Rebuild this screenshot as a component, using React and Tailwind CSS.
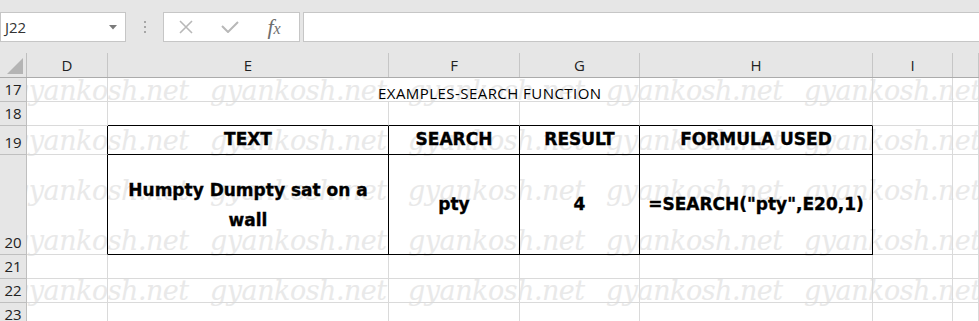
import React from 'react';

const COLS = ['D', 'E', 'F', 'G', 'H', 'I', ''];

const gridCols = 'grid grid-cols-[27px_81px_281px_131px_120px_233px_80px_1fr]';

// which cells carry the black table border (right / bottom)
const blackRight = {
  19: ['D', 'E', 'F', 'G', 'H'],
  20: ['D', 'E', 'F', 'G', 'H'],
};
const blackBottom = {
  18: ['E', 'F', 'G', 'H'],
  19: ['E', 'F', 'G', 'H'],
  20: ['E', 'F', 'G', 'H'],
};

const Cell = ({ row, col, className = '', children }) => {
  const r = (blackRight[row] || []).includes(col);
  const b = (blackBottom[row] || []).includes(col);
  return (
    <div
      className={`border-r border-b ${r ? 'border-r-black' : 'border-r-[#dadada]'} ${
        b ? 'border-b-black' : 'border-b-[#dadada]'
      } ${className}`}
    >
      {children}
    </div>
  );
};

const RowHead = ({ n }) => (
  <div className="bg-[#e6e6e6] border-r border-b border-[#bfbfbf] flex items-end justify-center pb-[4px] font-['Open_Sans',sans-serif] font-normal text-[15px] leading-none text-[#222] [-webkit-text-stroke:0]">
    {n}
  </div>
);

const Watermark = () => (
  <div className="absolute inset-0 flex flex-col gap-[24px] pl-[12px] overflow-hidden pointer-events-none">
    {[0, 1, 2, 3, 4].map((r) => (
      <div key={r} className="flex h-[26px] shrink-0">
        {[0, 1, 2, 3, 4].map((c) => (
          <div
            key={c}
            className="w-[198px] shrink-0 italic text-[27px] leading-[26px] text-[#e9e9e9] font-['DejaVu_Serif',serif] tracking-[-0.5px]"
          >
            gyankosh.net
          </div>
        ))}
      </div>
    ))}
  </div>
);

const Toolbar = () => (
  <div className="h-[53px] bg-[#e6e6e6] flex items-start pt-[12px]">
    <div className="w-[126px] h-[30px] bg-white border border-[#c6c6c6] flex items-center justify-between pl-[4px] pr-[8px]">
      <span className="text-[15px] text-[#333]">J22</span>
      <svg width="8" height="5" viewBox="0 0 8 5">
        <path d="M0 0h8L4 4.5z" fill="#7a7a7a" />
      </svg>
    </div>
    <div className="w-[37px] h-[30px] flex flex-col items-center justify-center gap-[3px]">
      <span className="w-[2px] h-[2px] bg-[#a6a6a6]" />
      <span className="w-[2px] h-[2px] bg-[#a6a6a6]" />
      <span className="w-[2px] h-[2px] bg-[#a6a6a6]" />
    </div>
    <div className="w-[137px] h-[30px] bg-white border border-[#c6c6c6] flex items-center">
      <div className="w-[44px] flex justify-center">
        <svg width="16" height="14" viewBox="0 0 16 14">
          <path d="M2 1l12 12M14 1L2 13" stroke="#b8b8b8" strokeWidth="1.6" fill="none" />
        </svg>
      </div>
      <div className="w-[44px] flex justify-center">
        <svg width="18" height="12" viewBox="0 0 18 12">
          <path d="M1 5l6 6L17 1" stroke="#b8b8b8" strokeWidth="2" fill="none" />
        </svg>
      </div>
      <div className="w-[44px] flex justify-center">
        <span className="font-['Liberation_Serif',serif] italic text-[#6e6e6e] leading-none">
          <span className="text-[22px]">f</span>
          <span className="text-[16px]">x</span>
        </span>
      </div>
    </div>
    <div className="ml-[3px] flex-1 h-[30px] bg-white border border-[#c6c6c6] border-r-0" />
  </div>
);

export default function App() {
  return (
    <div className="w-[979px] h-[321px] overflow-hidden bg-white font-['Open_Sans',sans-serif] text-black">
      <Toolbar />

      {/* column headers */}
      <div className={`${gridCols} h-[25px] bg-[#e6e6e6] border-b border-[#ababab]`}>
        <div className="border-r border-[#bfbfbf] flex items-end justify-end pr-[3px] pb-[3px]">
          <svg width="16" height="16" viewBox="0 0 16 16">
            <path d="M16 0V16H0z" fill="#b4b4b4" />
          </svg>
        </div>
        {COLS.map((c, i) => (
          <div
            key={i}
            className="border-r border-[#c6c6c6] flex items-center justify-center text-[15px] leading-none text-[#222]"
          >
            {c}
          </div>
        ))}
      </div>

      <div className="relative">
        <Watermark />

        <div className="relative">
          {/* row 17 */}
          <div className={`${gridCols} h-[24px]`}>
            <RowHead n={17} />
            <Cell row={17} col="D" />
            <div className="col-span-3 border-r border-b border-[#dadada] flex items-end pl-[270px] text-[15px] tracking-[0.45px] leading-none whitespace-nowrap">
              EXAMPLES-SEARCH FUNCTION
            </div>
            <Cell row={17} col="H" />
            <Cell row={17} col="I" />
            <Cell row={17} col="J" />
          </div>

          {/* row 18 */}
          <div className={`${gridCols} h-[24px]`}>
            <RowHead n={18} />
            {['D', 'E', 'F', 'G', 'H', 'I', 'J'].map((c) => (
              <Cell key={c} row={18} col={c} />
            ))}
          </div>

          {/* row 19 - table header */}
          <div className={`${gridCols} h-[29px] font-['DejaVu_Sans',sans-serif] font-bold text-[17px] [-webkit-text-stroke:0.35px_black]`}>
            <RowHead n={19} />
            <Cell row={19} col="D" />
            <Cell row={19} col="E" className="flex items-center justify-center">TEXT</Cell>
            <Cell row={19} col="F" className="flex items-center justify-center">SEARCH</Cell>
            <Cell row={19} col="G" className="flex items-center justify-center">RESULT</Cell>
            <Cell row={19} col="H" className="flex items-center justify-center">FORMULA USED</Cell>
            <Cell row={19} col="I" />
            <Cell row={19} col="J" />
          </div>

          {/* row 20 - data */}
          <div className={`${gridCols} h-[100px] font-['DejaVu_Sans',sans-serif] font-bold text-[17px] [-webkit-text-stroke:0.35px_black]`}>
            <RowHead n={20} />
            <Cell row={20} col="D" />
            <Cell row={20} col="E" className="flex items-center justify-center text-center leading-[30px] px-[6px]">
              Humpty Dumpty sat on a wall
            </Cell>
            <Cell row={20} col="F" className="flex items-center justify-center">pty</Cell>
            <Cell row={20} col="G" className="flex items-center justify-center">4</Cell>
            <Cell row={20} col="H" className="flex items-center justify-center whitespace-nowrap">
              =SEARCH("pty",E20,1)
            </Cell>
            <Cell row={20} col="I" />
            <Cell row={20} col="J" />
          </div>

          {[21, 22, 23].map((n) => (
            <div key={n} className={`${gridCols} h-[24px]`}>
              <RowHead n={n} />
              {['D', 'E', 'F', 'G', 'H', 'I', 'J'].map((c) => (
                <Cell key={c} row={n} col={c} />
              ))}
            </div>
          ))}
        </div>
      </div>
    </div>
  );
}
